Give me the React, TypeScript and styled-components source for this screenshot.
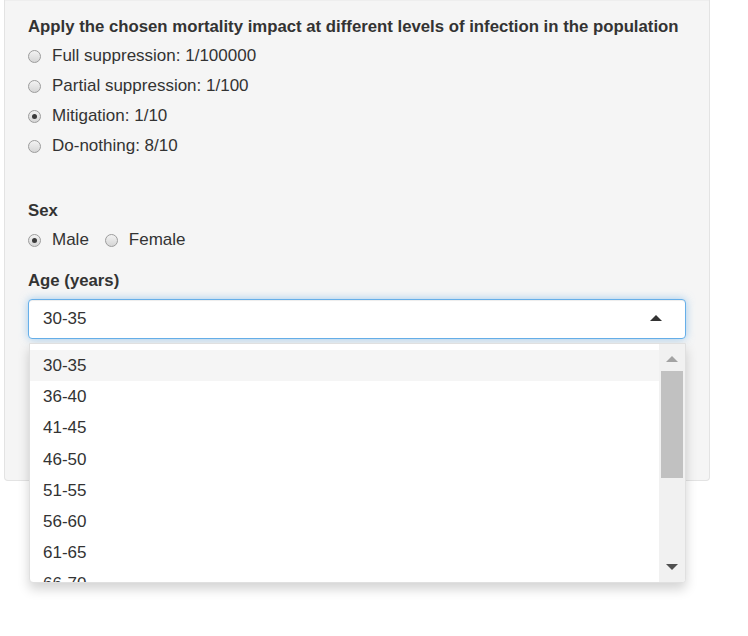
import React from "react";
import styled, { createGlobalStyle } from "styled-components";

const GlobalStyle = createGlobalStyle`
  html, body {
    margin: 0;
    padding: 0;
    background: #ffffff;
  }
  body {
    font-family: "Liberation Sans", Arial, Helvetica, sans-serif;
    font-size: 17px;
    color: #333333;
  }
`;

const mortality = [
  { label: "Full suppression: 1/100000", checked: false },
  { label: "Partial suppression: 1/100", checked: false },
  { label: "Mitigation: 1/10", checked: true },
  { label: "Do-nothing: 8/10", checked: false },
];

const ages = ["30-35", "36-40", "41-45", "46-50", "51-55", "56-60", "61-65", "66-70"];

const App = () => {
  return (
    <Page>
      <GlobalStyle />
      <Well>
        <Label>Apply the chosen mortality impact at different levels of infection in the population</Label>
        <RadioList>
          {mortality.map((m) => (
            <RadioRow key={m.label}>
              <Radio checked={m.checked} />
              <span>{m.label}</span>
            </RadioRow>
          ))}
        </RadioList>

        <Label $top={39}>Sex</Label>
        <InlineRadios>
          <RadioRow>
            <Radio checked />
            <span>Male</span>
          </RadioRow>
          <RadioRow>
            <Radio />
            <span>Female</span>
          </RadioRow>
        </InlineRadios>

        <Label $top={15}>Age (years)</Label>
        <SelectWrap>
          <SelectInput>
            <span>30-35</span>
            <Caret />
          </SelectInput>
          <Dropdown>
            <Options>
              {ages.map((a, i) => (
                <Option key={a} $active={i === 0}>
                  {a}
                </Option>
              ))}
            </Options>
            <ScrollTrack>
              <ArrowUp />
              <Thumb />
              <ArrowDown />
            </ScrollTrack>
          </Dropdown>
        </SelectWrap>
      </Well>
    </Page>
  );
};

export default App;

const Page = styled.div`
  width: 748px;
  height: 636px;
  overflow: hidden;
`;

const Well = styled.div`
  margin-left: 4px;
  width: 706px;
  height: 481px;
  box-sizing: border-box;
  background: #f5f5f5;
  border: 1px solid #e3e3e3;
  border-top: none;
  border-radius: 0 0 4px 4px;
  padding: 16px 23px 0 23px;
  box-shadow: inset 0 1px 1px rgba(0, 0, 0, 0.03);
`;

const Label = styled.div<{ $top?: number }>`
  font-weight: bold;
  font-size: 16.75px;
  line-height: 22px;
  margin-top: ${(p) => p.$top ?? 0}px;
  white-space: nowrap;
`;

const RadioList = styled.div`
  display: flex;
  flex-direction: column;
  margin-top: 3px;
`;

const InlineRadios = styled.div`
  display: flex;
  gap: 16px;
  margin-top: 3px;
`;

const RadioRow = styled.label`
  display: flex;
  align-items: center;
  height: 30px;
  gap: 11px;
  line-height: 20px;
`;

const Radio = styled.span<{ checked?: boolean }>`
  position: relative;
  width: 13px;
  height: 13px;
  box-sizing: border-box;
  border-radius: 50%;
  border: 1px solid #9c9c9c;
  background: linear-gradient(#f2f2f2, #d6d6d6);
  &::after {
    content: "";
    display: ${(p) => (p.checked ? "block" : "none")};
    position: absolute;
    left: 3px;
    top: 3px;
    width: 5px;
    height: 5px;
    border-radius: 50%;
    background: #3a3a3a;
  }
`;

const SelectWrap = styled.div`
  position: relative;
  margin-top: 7px;
`;

const SelectInput = styled.div`
  display: flex;
  align-items: center;
  justify-content: space-between;
  height: 40px;
  box-sizing: border-box;
  padding: 0 23px 0 14px;
  background: #ffffff;
  border: 1px solid #66afe9;
  border-radius: 4px;
  box-shadow: inset 0 1px 1px rgba(0, 0, 0, 0.075), 0 0 8px rgba(102, 175, 233, 0.6);
  line-height: 20px;
`;

const Caret = styled.span`
  width: 0;
  height: 0;
  border-left: 6px solid transparent;
  border-right: 6px solid transparent;
  border-bottom: 6px solid #333333;
  margin-top: -2px;
`;

const Dropdown = styled.div`
  position: absolute;
  top: 44px;
  left: 1px;
  right: 0;
  height: 240px;
  box-sizing: border-box;
  display: flex;
  background: #ffffff;
  border: 1px solid #e0e0e0;
  border-radius: 0 0 4px 4px;
  box-shadow: 0 6px 12px rgba(0, 0, 0, 0.175);
  overflow: hidden;
`;

const Options = styled.div`
  flex: 1;
  padding-top: 6px;
  overflow: hidden;
`;

const Option = styled.div<{ $active?: boolean }>`
  padding: 6px 13px;
  line-height: 19.2px;
  background: ${(p) => (p.$active ? "#f5f5f5" : "transparent")};
`;

const ScrollTrack = styled.div`
  position: relative;
  width: 26px;
  background: #f1f1f1;
`;

const Thumb = styled.div`
  position: absolute;
  left: 2px;
  right: 2px;
  top: 27px;
  height: 107px;
  background: #c1c1c1;
`;

const ArrowUp = styled.div`
  position: absolute;
  left: 7px;
  top: 12px;
  width: 0;
  height: 0;
  border-left: 6px solid transparent;
  border-right: 6px solid transparent;
  border-bottom: 6px solid #a3a3a3;
`;

const ArrowDown = styled.div`
  position: absolute;
  left: 7px;
  bottom: 12px;
  width: 0;
  height: 0;
  border-left: 6px solid transparent;
  border-right: 6px solid transparent;
  border-top: 6px solid #505050;
`;
